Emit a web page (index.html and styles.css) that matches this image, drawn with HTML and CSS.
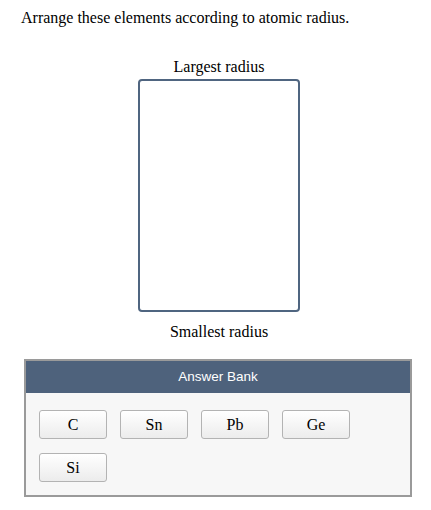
FILE: index.html
```html
<!DOCTYPE html>
<html lang="en">
<head>
  <meta charset="UTF-8">
  <title>Atomic radius ranking</title>
  <link rel="stylesheet" href="styles.css">
</head>
<body>

  <p class="prompt">Arrange these elements according to atomic radius.</p>

  <div class="ranking">
    <div class="rank-label">Largest radius</div>
    <div class="drop-box"></div>
    <div class="rank-label">Smallest radius</div>
  </div>

  <div class="bank">
    <div class="bank-title">Answer Bank</div>
    <div class="bank-items">
      <button class="chip">C</button>
      <button class="chip">Sn</button>
      <button class="chip">Pb</button>
      <button class="chip">Ge</button>
      <button class="chip">Si</button>
    </div>
  </div>

</body>
</html>
```

FILE: styles.css
```css
body {
  font-family: "Liberation Serif", "Times New Roman", serif;
  font-size: 16px;
  color: #000;
  background-color: #ffffff;
  margin: 0;
  padding: 9px 0 0 0;
}

.prompt {
  margin: 0 0 0 21px;
  line-height: 18px;
}

.ranking {
  width: 162px;
  margin: 31px 0 0 138px;
  display: flex;
  flex-direction: column;
  align-items: center;
}

.rank-label {
  line-height: 18px;
}

.drop-box {
  box-sizing: border-box;
  width: 162px;
  height: 233px;
  margin: 3px 0 11px 0;
  border: 2px solid #4f6580;
  border-radius: 4px;
  background-color: #fff;
}

.bank {
  box-sizing: border-box;
  width: 388px;
  margin: 18px 0 0 24px;
  border: 2px solid #9a9a9a;
  background-color: #f7f7f7;
}

.bank-title {
  background-color: #4e627c;
  color: #fff;
  font-family: "Liberation Sans", Arial, sans-serif;
  font-size: 13.5px;
  text-align: center;
  height: 32px;
  line-height: 32px;
}

.bank-items {
  display: flex;
  flex-wrap: wrap;
  gap: 14px 13px;
  padding: 17px 13px 13px 13px;
}

.chip {
  width: 68px;
  height: 29px;
  padding: 0;
  border: 1px solid #b3b3b3;
  border-radius: 3px;
  background: linear-gradient(#ffffff, #ececec);
  font-family: "Liberation Serif", "Times New Roman", serif;
  font-size: 16px;
  color: #000;
  cursor: pointer;
}
```
